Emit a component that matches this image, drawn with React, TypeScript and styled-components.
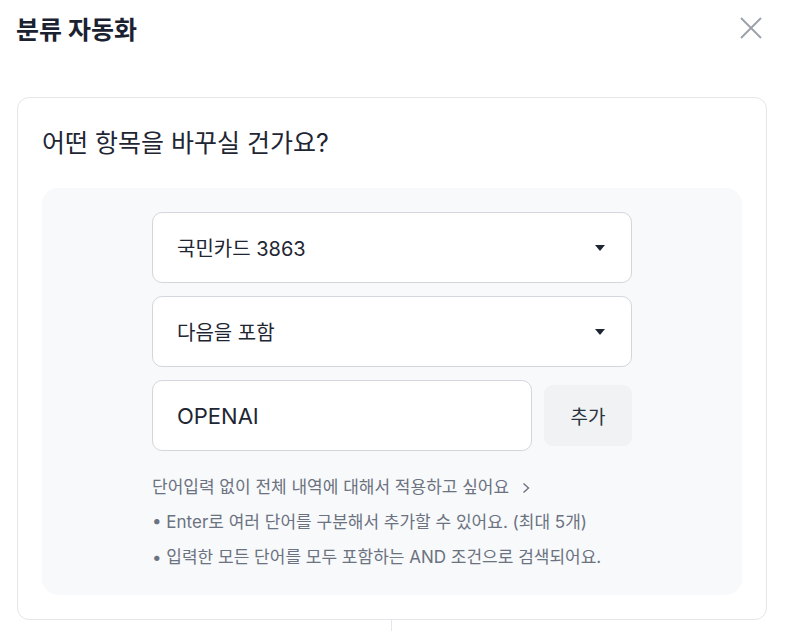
import styled, { createGlobalStyle } from 'styled-components';

const GlobalStyle = createGlobalStyle`
  body {
    margin: 0;
    background: #ffffff;
    font-family: Inter, "Noto Sans CJK KR", sans-serif;
    color: #1f2633;
  }
`;

const Caret = () => (
  <svg width="10" height="6" viewBox="0 0 10 6">
    <path d="M0 0 L10 0 L5 6 Z" fill="#1f2633" />
  </svg>
);

const CloseIcon = () => (
  <svg width="22" height="22" viewBox="0 0 22 22">
    <path d="M1 1 L21 21 M21 1 L1 21" stroke="#9aa0a8" strokeWidth="1.8" fill="none" />
  </svg>
);

export default function App() {
  return (
    <>
      <GlobalStyle />
      <Page>
        <Header>
          <Title>분류 자동화</Title>
          <CloseButton aria-label="닫기">
            <CloseIcon />
          </CloseButton>
        </Header>
        <Card>
          <Question>어떤 항목을 바꾸실 건가요?</Question>
          <Panel>
            <Form>
              <Select>
                <span>국민카드 3863</span>
                <Caret />
              </Select>
              <Select>
                <span>다음을 포함</span>
                <Caret />
              </Select>
              <InputRow>
                <TextInput defaultValue="OPENAI" />
                <AddButton>추가</AddButton>
              </InputRow>
              <Hints>
                <HintLink>
                  단어입력 없이 전체 내역에 대해서 적용하고 싶어요
                  <svg width="10" height="12" viewBox="0 0 10 12">
                    <path d="M2.5 1.5 L7.5 6 L2.5 10.5" stroke="#6b7280" strokeWidth="1.4" fill="none" />
                  </svg>
                </HintLink>
                <Hint>• Enter로 여러 단어를 구분해서 추가할 수 있어요. (최대 5개)</Hint>
                <Hint>• 입력한 모든 단어를 모두 포함하는 AND 조건으로 검색되어요.</Hint>
              </Hints>
            </Form>
          </Panel>
        </Card>
        <Divider />
      </Page>
    </>
  );
}

const Page = styled.div`
  width: 793px;
  height: 631px;
  overflow: hidden;
`;

const Header = styled.div`
  display: flex;
  align-items: center;
  justify-content: space-between;
  height: 56px;
  padding: 0 31px 0 16px;
`;

const Title = styled.h1`
  margin: 0;
  font-size: 25px;
  font-weight: 700;
  color: #1a2231;
`;

const CloseButton = styled.button`
  border: none;
  background: none;
  padding: 0;
  display: flex;
`;

const Card = styled.section`
  margin: 41px 0 0 17px;
  width: 750px;
  box-sizing: border-box;
  border: 1px solid #e4e6ea;
  border-radius: 12px;
  padding: 24px;
`;

const Question = styled.h2`
  margin: 4px 0 28px;
  font-size: 25px;
  font-weight: 400;
  line-height: 34px;
  color: #1f2633;
`;

const Panel = styled.div`
  background: #f8f9fb;
  border-radius: 16px;
  padding: 24px 0 20px;
  display: flex;
  justify-content: center;
`;

const Form = styled.div`
  width: 480px;
  display: flex;
  flex-direction: column;
  gap: 13px;
`;

const Select = styled.div`
  box-sizing: border-box;
  height: 71px;
  display: flex;
  align-items: center;
  justify-content: space-between;
  padding: 0 26px 0 24px;
  background: #ffffff;
  border: 1px solid #d3d6db;
  border-radius: 10px;
  font-size: 20px;
  color: #1f2633;
`;

const InputRow = styled.div`
  display: flex;
  align-items: center;
  gap: 12px;
`;

const TextInput = styled.input`
  box-sizing: border-box;
  width: 380px;
  height: 71px;
  padding: 0 24px;
  background: #ffffff;
  border: 1px solid #d3d6db;
  border-radius: 10px;
  font-family: Inter, "Noto Sans CJK KR", sans-serif;
  font-size: 22px;
  color: #1f2633;
  outline: none;
`;

const AddButton = styled.button`
  width: 88px;
  height: 61px;
  border: none;
  border-radius: 9px;
  background: #f1f2f3;
  font-family: Inter, "Noto Sans CJK KR", sans-serif;
  font-size: 19px;
  color: #2b3240;
`;

const Hints = styled.div`
  display: flex;
  flex-direction: column;
  margin-top: 6px;
`;

const Hint = styled.p`
  margin: 0;
  font-size: 17px;
  line-height: 35px;
  color: #6b7280;
`;

const HintLink = styled(Hint)`
  display: flex;
  align-items: center;
  gap: 12px;
`;

const Divider = styled.div`
  width: 1px;
  height: 20px;
  margin-left: 391px;
  background: #e4e6ea;
`;
